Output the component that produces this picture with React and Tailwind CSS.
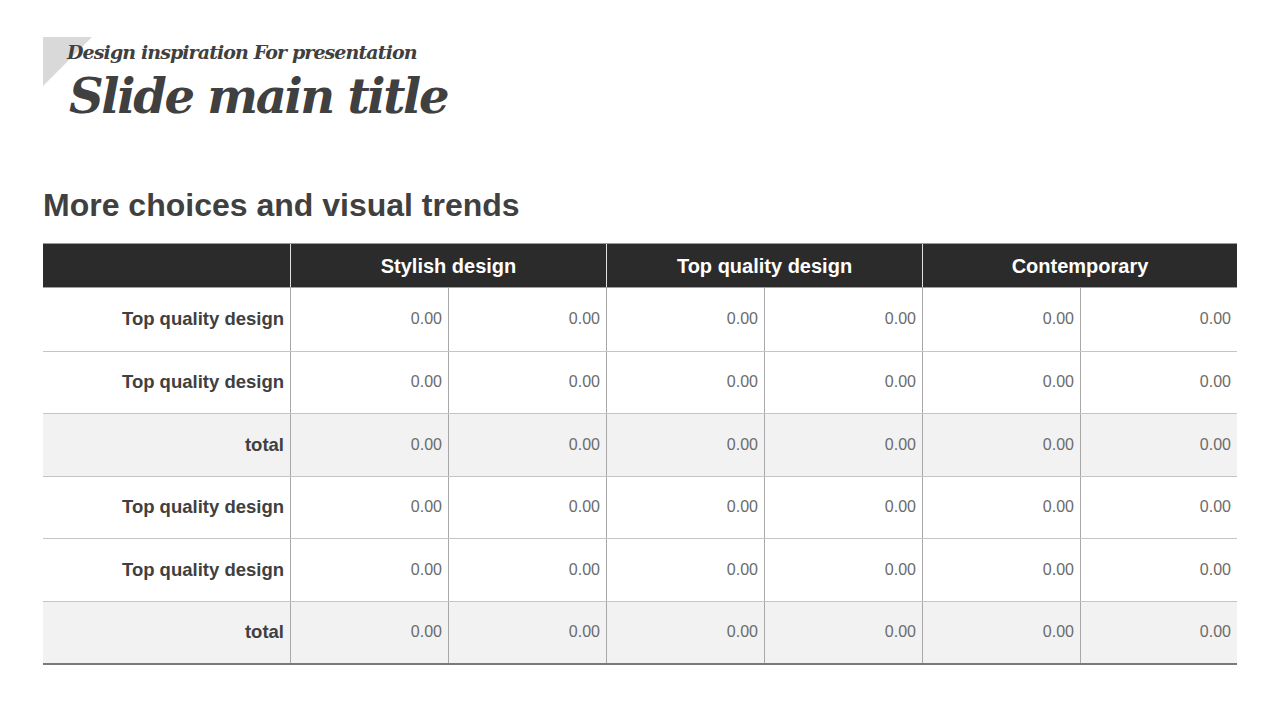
import React from "react";

const rows = [
    { label: "Top quality design", total: false },
    { label: "Top quality design", total: false },
    { label: "total", total: true },
    { label: "Top quality design", total: false },
    { label: "Top quality design", total: false },
    { label: "total", total: true },
];

const groups = ["Stylish design", "Top quality design", "Contemporary"];

export default function App() {
    return (
        <div
            className="w-[1280px] h-[720px] bg-white relative overflow-hidden"
            style={{ fontFamily: '"Liberation Sans", Arial, sans-serif' }}
        >
            {/* corner triangle */}
            <svg className="absolute left-[43px] top-[37px]" width="50" height="50" viewBox="0 0 50 50">
                <polygon points="0,0 49,0 0,49" fill="#d9d9d9" />
            </svg>

            <div className="relative pl-[67px] pt-[40px] text-[#404040]">
                <div
                    className="text-[19px] leading-[24px] italic font-bold tracking-[-0.9px]"
                    style={{ fontFamily: '"DejaVu Serif", "Liberation Serif", serif' }}
                >
                    Design inspiration For presentation
                </div>
                <div
                    className="text-[48px] leading-[64px] italic font-bold tracking-[-2.3px] pl-[2px]"
                    style={{ fontFamily: '"DejaVu Serif", "Liberation Serif", serif' }}
                >
                    Slide main title
                </div>
            </div>

            <div className="pl-[43px] pt-[58px]">
                <h2 className="text-[32px] leading-[38px] font-bold text-[#404040]">
                    More choices and visual trends
                </h2>

                <div className="mt-[19px] w-[1194px] border-b-2 border-[#7a7a7a]">
                    {/* header */}
                    <div className="grid grid-cols-[247px_316px_316px_315px] h-[45px] bg-[#2b2b2b] border-t border-[#9a9a9a] border-b border-b-[#a0a0a0]">
                        <div />
                        {groups.map((g, i) => (
                            <div
                                key={i}
                                className="border-l border-[#e0e0e0] flex items-center justify-center text-white font-bold text-[20px]"
                            >
                                {g}
                            </div>
                        ))}
                    </div>

                    {rows.map((r, i) => (
                        <div
                            key={i}
                            className={
                                "grid grid-cols-[247px_158px_158px_158px_158px_158px_157px] h-[62.5px] " +
                                (i > 0 ? "border-t border-[#c4c4c4] " : "") +
                                (r.total ? "bg-[#f2f2f2]" : "bg-white")
                            }
                        >
                            <div className="flex items-center justify-end pr-[6px] font-bold text-[18.5px] text-[#404040]">
                                {r.label}
                            </div>
                            {[0, 1, 2, 3, 4, 5].map((c) => (
                                <div
                                    key={c}
                                    className="border-l border-[#a8a8a8] flex items-center justify-end pr-[6px] text-[16px] text-[#6b6b6b]"
                                >
                                    0.00
                                </div>
                            ))}
                        </div>
                    ))}
                </div>
            </div>
        </div>
    );
}
